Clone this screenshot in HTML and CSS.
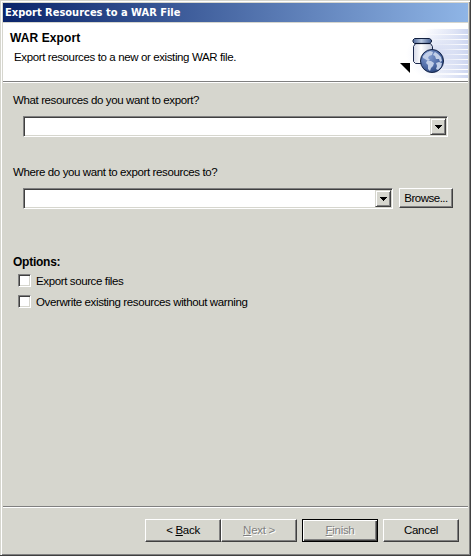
FILE: index.html
```html
<!DOCTYPE html>
<html lang="en">
<head>
<meta charset="utf-8">
<title>Export Resources to a WAR File</title>
<link rel="stylesheet" href="styles.css">
</head>
<body>
<div class="window">
  <div class="titlebar"><span class="title">Export Resources to a WAR File</span></div>
  <header class="banner">
    <div class="banner-text">
      <h1>WAR Export</h1>
      <p>Export resources to a new or existing WAR file.</p>
    </div>
    <svg class="art" width="69" height="58" viewBox="399 23 69 58">
      <defs>
        <linearGradient id="fade" gradientUnits="userSpaceOnUse" x1="425" x2="468" y1="0" y2="0"><stop offset="0" stop-color="#d5dcf3" stop-opacity="0"/><stop offset="1" stop-color="#cdd6f0"/></linearGradient>
        <linearGradient id="glass"><stop offset="0" stop-color="#d5d9e8"/><stop offset=".4" stop-color="#fff"/><stop offset="1" stop-color="#c3cadc"/></linearGradient>
        <linearGradient id="lid"><stop offset="0" stop-color="#50699c"/><stop offset=".45" stop-color="#b9c8df"/><stop offset="1" stop-color="#405b90"/></linearGradient>
        <radialGradient id="globe" cx=".35" cy=".3" r=".75"><stop offset="0" stop-color="#849ed0"/><stop offset=".55" stop-color="#5672ad"/><stop offset="1" stop-color="#29457e"/></radialGradient>
        <radialGradient id="halo"><stop offset="0" stop-color="#d3daf2"/><stop offset="1" stop-color="#e5eaf8" stop-opacity="0"/></radialGradient>
      </defs>
      <ellipse cx="438" cy="54" rx="32" ry="27" fill="url(#halo)"/>
      <path fill="url(#fade)" d="M425 29h43v5h-43zM425 35h43v4h-43zM425 40h43v4h-43zM425 45h43v4h-43zM425 50h43v4h-43zM425 55h43v4h-43zM425 60h43v4h-43zM425 65h43v4h-43zM425 70h43v3h-43zM425 75h43v3h-43z"/>
      <path d="M400 63h10v10z"/>
      <path d="M415.500 43.500l-2 3v15l2 2h15l2-2v-15l-2-3z" fill="url(#glass)" stroke="#19264a"/>
      <path d="M414.500 38.500h15l2 1.500v2l-2 1.500h-15l-1.500-1.500v-2z" fill="url(#lid)" stroke="#12203f"/>
      <path d="M415 43.500h15" stroke="#0b1530" stroke-width="1.200"/>
      <circle cx="432" cy="61" r="11.500" fill="url(#globe)" stroke="#142447"/>
      <path fill="#c2cfe8" d="M423 56l3-3 4-2 3 1-1 3-3 1-1 2 2 2-2 1-3-2-2-1zM435 52l3 2 3 3 1 4-2 1-1-3-3 0-1-3-2-1 1-2zM427 61l4 0 3 2-1 3-2 2-1 3-2-2 0-4-2-2zM436 63l3-1 3 1-1 4-3 3-2-1 1-3z"/>
    </svg>
  </header>
  <main class="content">
    <label class="q1">What resources do you want to export?</label>
    <div class="row first">
      <div class="combo"><span class="drop"><svg width="7" height="4" shape-rendering="crispEdges"><path d="M0 0h7v1H0zM1 1h5v1H1zM2 2h3v1H2zM3 3h1v1H3z"/></svg></span></div>
    </div>
    <label class="q2">Where do you want to export resources to?</label>
    <div class="row second">
      <div class="combo"><span class="drop"><svg width="7" height="4" shape-rendering="crispEdges"><path d="M0 0h7v1H0zM1 1h5v1H1zM2 2h3v1H2zM3 3h1v1H3z"/></svg></span></div>
      <button class="btn browse"><span>Browse...</span></button>
    </div>
    <h2>Options:</h2>
    <div class="check"><i></i><span>Export source files</span></div>
    <div class="check"><i></i><span>Overwrite existing resources without warning</span></div>
  </main>
  <footer class="footer">
    <button class="btn"><span>&lt; <u>B</u>ack</span></button>
    <button class="btn off"><span><u>N</u>ext &gt;</span></button>
    <button class="btn off default"><span><u>F</u>inish</span></button>
    <button class="btn"><span>Cancel</span></button>
  </footer>
</div>
</body>
</html>
```
FILE: styles.css
```css
* { box-sizing: border-box; }
body { margin: 0; font: 11.5px/14px "Liberation Sans", Arial, sans-serif; letter-spacing: -.38px; color: #000; }
.window {
  width: 471px; height: 556px; display: flex; flex-direction: column;
  background: #d6d6ce;
  border: solid; border-width: 0 1px 1px 0; border-color: #404040;
  box-shadow: inset 1px 1px #d6d6ce, inset 2px 2px #fff, inset -1px -1px #808080;
  padding: 3px 2px 1px 3px;
}
.titlebar { height: 19px; display: flex; align-items: center; padding: 1px 0 0 2px; background: linear-gradient(90deg, #0a246a, #8fb5e6); }
.title { font: bold 11px/18px "DejaVu Sans Condensed", "DejaVu Sans", sans-serif; letter-spacing: 0; color: #fff; white-space: nowrap; }
.banner { height: 59px; margin-top: 1px; background: #fff; border-bottom: 1px solid #808080; box-shadow: 0 1px #fff; display: flex; justify-content: space-between; }
.banner-text { padding: 8px 0 0 7px; white-space: nowrap; }
h1, h2 { margin: 0; font-size: 12px; line-height: 14px; font-weight: bold; }
h1 { letter-spacing: .1px; }
.banner p { margin: 5px 0 0 4px; }
.art { display: block; }
.content { flex: 1; padding: 11px 0 0 10px; display: flex; flex-direction: column; align-items: flex-start; white-space: nowrap; }
.row { display: flex; gap: 6px; margin: 9px 0 0 10px; }
.first { width: 425px; }
.second { width: 430px; }
.q2 { margin-top: 28px; }
.combo { flex: 1; height: 21px; background: #fff; border: 1px solid; border-color: #808080 #fff #fff #808080; box-shadow: inset 1px 1px #404040, inset -1px -1px #d6d6ce; display: flex; justify-content: flex-end; padding: 1px; }
.drop { width: 16px; height: 17px; display: flex; align-items: center; justify-content: center; background: #d6d6ce; border: 1px solid; border-color: #d6d6ce #404040 #404040 #d6d6ce; box-shadow: inset 1px 1px #fff, inset -1px -1px #808080; }
.btn { font: inherit; letter-spacing: -.3px; color: #000; width: 76px; height: 23px; padding: 0 0 1px; background: #d6d6ce; border: 1px solid; border-color: #fff #404040 #404040 #fff; box-shadow: inset -1px -1px #808080; border-radius: 0; white-space: nowrap; }
.browse { width: 54px; height: 20px; letter-spacing: -.5px; }
h2 { margin-top: 46px; letter-spacing: -.25px; }
.check { display: flex; align-items: center; gap: 5px; height: 13px; margin: 5px 0 3px 5px; }
.check i { width: 13px; height: 13px; background: #fff; border: 1px solid; border-color: #808080 #fff #fff #808080; box-shadow: inset 1px 1px #404040, inset -1px -1px #d6d6ce; }
.footer { height: 48px; border-top: 1px solid #808080; box-shadow: inset 0 1px #fff; display: flex; justify-content: flex-end; padding: 12px 9px 0 0; }
.off { color: #808080; text-shadow: 1px 1px #fff; }
.default { margin: 0 5px; border-color: #000; box-shadow: inset 1px 1px #fff, inset -1px -1px #404040, inset -2px -2px #808080; }
```
